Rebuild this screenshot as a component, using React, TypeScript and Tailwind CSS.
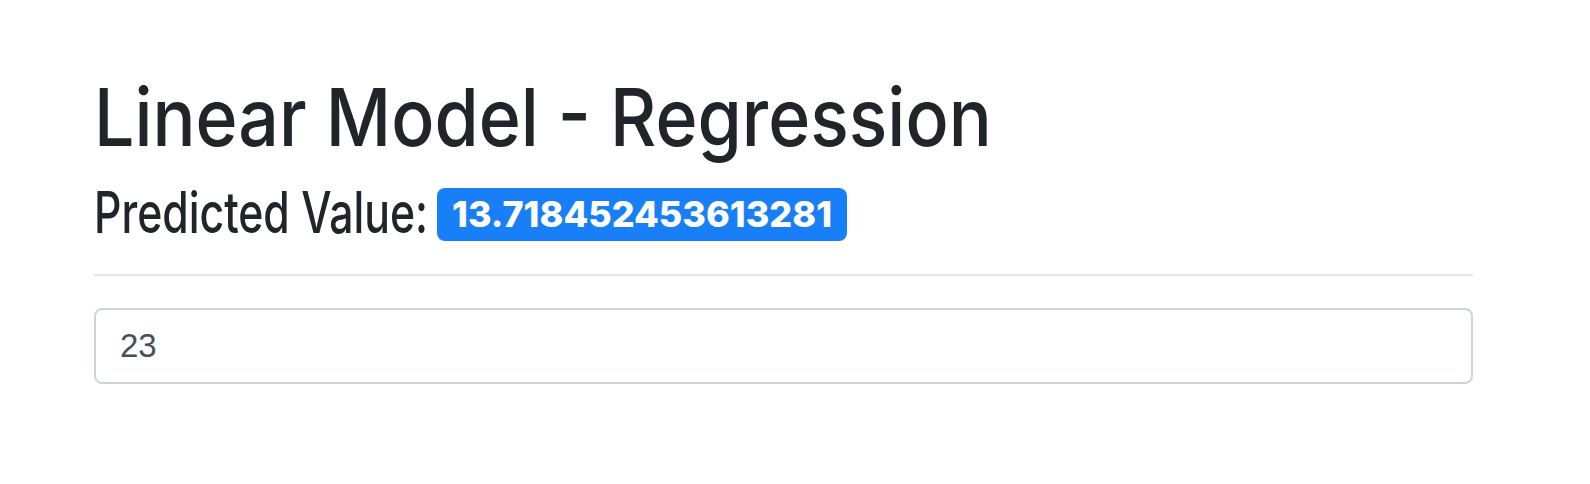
export default function App() {
  return (
    <div className="h-[484px] w-full bg-white pl-[94px] pr-[117px] pt-[69px] font-['Inter',sans-serif] text-[#212529]">
      <h1 className="origin-left scale-x-[0.895] whitespace-nowrap text-[80px] font-medium leading-[1.2]">
        Linear Model - Regression
      </h1>
      <div className="mt-[19px] flex items-start">
        <span className="inline-block w-[330px] whitespace-nowrap">
          <span className="inline-block origin-left scale-x-[0.75] text-[57px] font-medium leading-none">
            Predicted Value:
          </span>
        </span>
        <span className="ml-[13px] mt-[4px] rounded-[8px] bg-[#187ff8] px-[15px] pb-[9px] pt-[8px] text-[36px] font-extrabold leading-none text-white">
          13.718452453613281
        </span>
      </div>
      <div className="mt-[33px] h-[2px] bg-[#e4e5e7]" />
      <div className="mt-[32px] flex h-[76px] items-center rounded-[8px] border-2 border-[#ced4da] pl-[24px] font-['Liberation_Sans',Arial,sans-serif] text-[33px] text-[#495057]">
        23
      </div>
    </div>
  );
}
